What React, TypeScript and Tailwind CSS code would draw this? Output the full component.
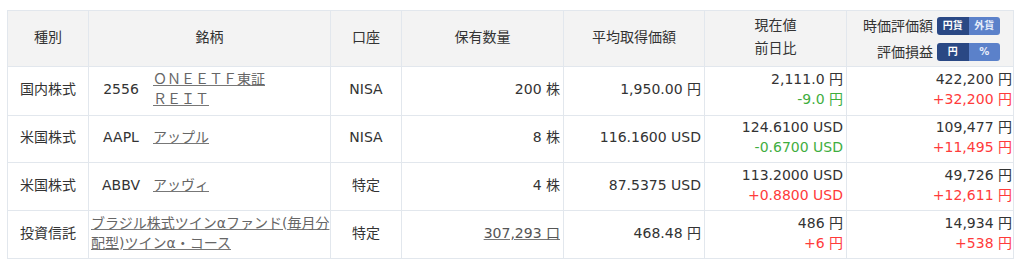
import React from "react";

type Row = {
  kind: string;
  code?: string;
  name: React.ReactNode;
  nameWidth?: string;
  account: string;
  qty: React.ReactNode;
  avg: string;
  price: string;
  change: string;
  value: string;
  gain: string;
};

const GREEN = "text-[#3fae3f]";
const RED = "text-[#ff3b3b]";

const rows: Row[] = [
  {
    kind: "国内株式",
    code: "2556",
    name: "ＯＮＥＥＴＦ東証ＲＥＩＴ",
    nameWidth: "w-[116px]",
    account: "NISA",
    qty: "200 株",
    avg: "1,950.00 円",
    price: "2,111.0 円",
    change: "-9.0 円",
    value: "422,200 円",
    gain: "+32,200 円",
  },
  {
    kind: "米国株式",
    code: "AAPL",
    name: "アップル",
    account: "NISA",
    qty: "8 株",
    avg: "116.1600 USD",
    price: "124.6100 USD",
    change: "-0.6700 USD",
    value: "109,477 円",
    gain: "+11,495 円",
  },
  {
    kind: "米国株式",
    code: "ABBV",
    name: "アッヴィ",
    account: "特定",
    qty: "4 株",
    avg: "87.5375 USD",
    price: "113.2000 USD",
    change: "+0.8800 USD",
    value: "49,726 円",
    gain: "+12,611 円",
  },
  {
    kind: "投資信託",
    name: (
      <>
        ブラジル株式ツインαファンド(毎月分
        <br />
        配型)ツインα・コース
      </>
    ),
    account: "特定",
    qty: (
      <a className="underline text-[#555] decoration-[#777]" href="#">
        307,293 口
      </a>
    ),
    avg: "468.48 円",
    price: "486 円",
    change: "+6 円",
    value: "14,934 円",
    gain: "+538 円",
  },
];

function Toggle({ left, right }: { left: string; right: string }) {
  return (
    <span className="inline-flex h-[18px] w-[63px] rounded-[3px] overflow-hidden text-[10px] font-bold leading-[18px] align-middle">
      <span className="flex-1 bg-[#2a4884] text-white text-center">{left}</span>
      <span className="flex-1 bg-[#5b81ca] text-[#e8eefa] text-center">{right}</span>
    </span>
  );
}

// cells sit a touch high in the original, hence the extra bottom padding
const cell = "border border-[#e2e7ed] align-middle pb-[4px]";
const head = "border border-[#e2e7ed] bg-[#f3f3f3] font-normal text-center align-middle pb-[3px]";

export default function App() {
  return (
    <div
      className="w-[1024px] h-[266px] bg-white pl-[7px] pt-[10px] text-[#333] text-[14px]"
      style={{ fontFamily: '"DejaVu Sans", "Noto Sans CJK JP", sans-serif' }}
    >
      <table className="border-collapse table-fixed w-[1006px]">
        <colgroup>
          <col className="w-[81px]" />
          <col className="w-[242px]" />
          <col className="w-[71px]" />
          <col className="w-[162px]" />
          <col className="w-[141px]" />
          <col className="w-[142px]" />
          <col className="w-[167px]" />
        </colgroup>
        <thead>
          <tr className="h-[56px]">
            <th className={head}>種別</th>
            <th className={head}>銘柄</th>
            <th className={head}>口座</th>
            <th className={head}>保有数量</th>
            <th className={head}>平均取得価額</th>
            <th className={`${head} leading-[23px]`}>
              現在値
              <br />
              前日比
            </th>
            <th className="border border-[#e2e7ed] bg-[#f3f3f3] font-normal align-middle pr-[13px] pt-[1px]">
              <div className="flex flex-col items-end gap-[8px] leading-[18px]">
                <div className="flex items-center gap-[4px]">
                  <span>時価評価額</span>
                  <Toggle left="円貨" right="外貨" />
                </div>
                <div className="flex items-center gap-[4px]">
                  <span>評価損益</span>
                  <Toggle left="円" right="%" />
                </div>
              </div>
            </th>
          </tr>
        </thead>
        <tbody className="leading-[20px]">
          {rows.map((r, i) => (
            <tr key={i} className={i === 0 ? "h-[49px]" : i === 1 ? "h-[47px]" : "h-[48px]"}>
              <td className={`${cell} text-center`}>{r.kind}</td>
              <td className={`${cell} pl-[2px]`}>
                <div className="flex items-center">
                  {r.code && <span className="w-[60px] shrink-0 text-center">{r.code}</span>}
                  <a
                    href="#"
                    className={`underline text-[#666] decoration-[#777] whitespace-nowrap ${r.code ? "ml-[2px]" : ""} ${r.nameWidth ?? ""}`}
                    style={r.nameWidth ? { whiteSpace: "normal" } : undefined}
                  >
                    {r.name}
                  </a>
                </div>
              </td>
              <td className={`${cell} text-center`}>{r.account}</td>
              <td className={`${cell} text-right pr-[3px]`}>{r.qty}</td>
              <td className={`${cell} text-right pr-[3px]`}>{r.avg}</td>
              <td className={`${cell} text-right pr-[3px]`}>
                <div>{r.price}</div>
                <div className={r.change.startsWith("-") ? GREEN : RED}>{r.change}</div>
              </td>
              <td className={`${cell} text-right pr-[1px]`}>
                <div>{r.value}</div>
                <div className={RED}>{r.gain}</div>
              </td>
            </tr>
          ))}
        </tbody>
      </table>
    </div>
  );
}
